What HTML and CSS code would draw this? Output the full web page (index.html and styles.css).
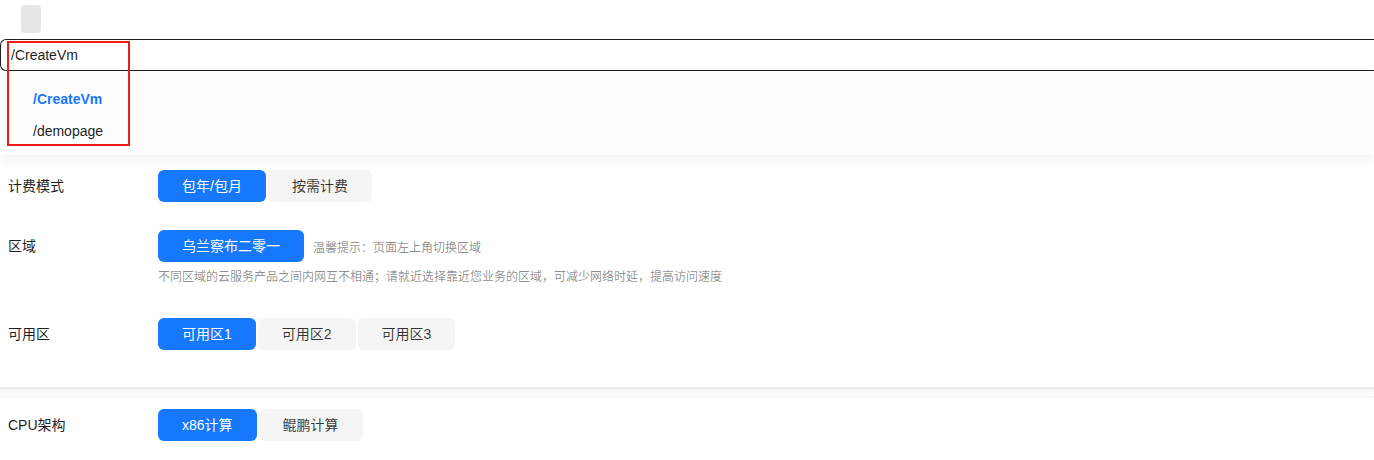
FILE: index.html
```html
<!DOCTYPE html>
<html lang="zh-CN">
<head>
<meta charset="utf-8">
<title>CreateVm</title>
<link rel="stylesheet" href="styles.css">
</head>
<body>
<div class="top">
  <div class="logo-box"></div>
</div>
<div class="search">
  <div class="input">/CreateVm</div>
  <div class="dropdown">
    <div class="option active">/CreateVm</div>
    <div class="option">/demopage</div>
  </div>
  <div class="highlight"></div>
</div>
<div class="form">
  <div class="row row-pay">
    <div class="label">计费模式</div>
    <div class="control">
      <div class="seg">
        <span class="btn primary">包年/包月</span>
        <span class="btn">按需计费</span>
      </div>
    </div>
  </div>
  <div class="row row-region">
    <div class="label">区域</div>
    <div class="control">
      <div class="seg">
        <span class="btn primary">乌兰察布二零一</span>
        <span class="tip">温馨提示：页面左上角切换区域</span>
      </div>
      <div class="help">不同区域的云服务产品之间内网互不相通；请就近选择靠近您业务的区域，可减少网络时延，提高访问速度</div>
    </div>
  </div>
  <div class="row row-zone">
    <div class="label">可用区</div>
    <div class="control">
      <div class="seg">
        <span class="btn primary">可用区1</span>
        <span class="btn">可用区2</span>
        <span class="btn">可用区3</span>
      </div>
    </div>
  </div>
  <div class="divider"></div>
  <div class="row row-cpu">
    <div class="label">CPU架构</div>
    <div class="control">
      <div class="seg">
        <span class="btn primary">x86计算</span>
        <span class="btn">鲲鹏计算</span>
      </div>
    </div>
  </div>
</div>
</body>
</html>
```

FILE: styles.css
```css
html, body {
  margin: 0;
  padding: 0;
  background: #ffffff;
}
body {
  font-family: "Liberation Sans", "Noto Sans CJK SC", Arial, sans-serif;
  font-size: 14px;
  color: rgba(0, 0, 0, 0.88);
  overflow: hidden;
}
.top {
  height: 39px;
  padding-top: 5px;
  padding-left: 21px;
  box-sizing: border-box;
}
.logo-box {
  width: 20px;
  height: 28px;
  background: #e6e6e6;
  border-radius: 4px;
}
.search {
  position: relative;
}
.input {
  height: 32px;
  box-sizing: border-box;
  border: 1px solid #1f1f1f;
  border-right: none;
  border-radius: 6px 0 0 6px;
  padding-left: 10px;
  line-height: 30px;
  color: #1f1f1f;
  margin-right: -2px;
}
.dropdown {
  background: #fdfdfd;
  padding: 12px 0 8px;
  box-shadow: 0 6px 12px rgba(0, 0, 0, 0.05);
}
.option {
  height: 32px;
  line-height: 32px;
  padding-left: 33px;
  color: #1f1f1f;
}
.option.active {
  color: #1677ff;
  font-weight: bold;
}
.highlight {
  position: absolute;
  left: 7px;
  top: 2px;
  width: 123px;
  height: 105px;
  box-sizing: border-box;
  border: 2px solid #f01c1c;
  pointer-events: none;
}
.form {
  padding-top: 15px;
}
.row {
  display: flex;
  align-items: flex-start;
}
.label {
  width: 150px;
  padding-left: 8px;
  line-height: 32px;
  flex: none;
  color: #1f1f1f;
}
.control {
  display: flex;
  flex-direction: column;
}
.seg {
  display: flex;
  align-items: center;
  gap: 2px;
}
.btn {
  height: 32px;
  line-height: 32px;
  padding: 0 24px;
  border-radius: 6px;
  background: #f5f5f5;
  color: rgba(0, 0, 0, 0.78);
  white-space: nowrap;
  font-family: "Liberation Sans", "Noto Sans CJK SC", sans-serif;
}
.btn.primary {
  background: #1677ff;
  color: #ffffff;
}
.tip {
  margin-left: 7px;
  font-size: 12px;
  color: rgba(0, 0, 0, 0.45);
}
.help {
  margin-top: 5px;
  font-size: 12px;
  line-height: 20px;
  color: rgba(0, 0, 0, 0.45);
}
.row-region {
  margin-top: 28px;
}
.row-zone {
  margin-top: 31px;
}
.divider {
  margin-top: 37px;
  height: 10px;
  box-sizing: border-box;
  border-top: 2px solid #ececec;
  border-bottom: 1px solid #f4f4f4;
  background: linear-gradient(#f7f7f7, #fdfdfd);
}
.row-cpu {
  margin-top: 12px;
}
```
